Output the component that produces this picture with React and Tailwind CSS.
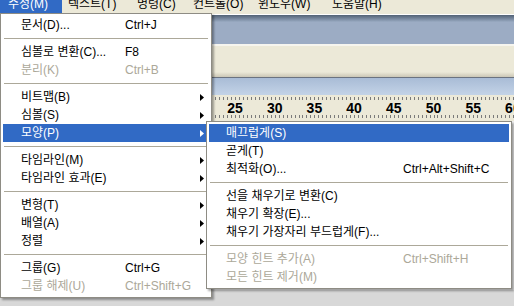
import React from "react";

const FONT = { fontFamily: '"Liberation Sans", "Noto Sans CJK KR", sans-serif' };

function Arrow({ white }) {
  return (
    <svg width="4" height="7" viewBox="0 0 4 7" className="block">
      <polygon points="0,0 4,3.5 0,7" fill={white ? "#ffffff" : "#000000"} />
    </svg>
  );
}

function Item({ label, shortcut, arrow, disabled, active, labelW, pl }) {
  const color = active ? "text-white" : disabled ? "text-[#aca899]" : "text-black";
  return (
    <div className={`flex h-[18px] items-center ${active ? "bg-[#316ac5]" : ""} ${color}`}>
      <div className="shrink-0 whitespace-nowrap" style={{ width: labelW, paddingLeft: pl }}>
        {label}
      </div>
      <div className="flex-1 whitespace-nowrap">{shortcut}</div>
      {arrow && (
        <div className="mr-[5px]">
          <Arrow white={active} />
        </div>
      )}
    </div>
  );
}

function Sep() {
  return <div className="my-[4px] mx-[1px] h-px bg-[#aca899]" />;
}

const mainItems = [
  { label: "문서(D)...", shortcut: "Ctrl+J" },
  "sep",
  { label: "심볼로 변환(C)...", shortcut: "F8" },
  { label: "분리(K)", shortcut: "Ctrl+B", disabled: true },
  "sep",
  { label: "비트맵(B)", arrow: true },
  { label: "심볼(S)", arrow: true },
  { label: "모양(P)", arrow: true, active: true },
  "sep",
  { label: "타임라인(M)", arrow: true },
  { label: "타임라인 효과(E)", arrow: true },
  "sep",
  { label: "변형(T)", arrow: true },
  { label: "배열(A)", arrow: true },
  { label: "정렬", arrow: true },
  "sep",
  { label: "그룹(G)", shortcut: "Ctrl+G" },
  { label: "그룹 해제(U)", shortcut: "Ctrl+Shift+G", disabled: true },
];

const subItems = [
  { label: "매끄럽게(S)", active: true },
  { label: "곧게(T)" },
  { label: "최적화(O)...", shortcut: "Ctrl+Alt+Shift+C" },
  "sep",
  { label: "선을 채우기로 변환(C)" },
  { label: "채우기 확장(E)..." },
  { label: "채우기 가장자리 부드럽게(F)..." },
  "sep",
  { label: "모양 힌트 추가(A)", shortcut: "Ctrl+Shift+H", disabled: true },
  { label: "모든 힌트 제거(M)", disabled: true },
];

const menuBar = [
  { label: "수정(M)", w: 62, pl: 8, active: true },
  { label: "텍스트(T)", w: 69, pl: 6 },
  { label: "명령(C)", w: 56, pl: 6 },
  { label: "컨트롤(O)", w: 65, pl: 6 },
  { label: "윈도우(W)", w: 74, pl: 6 },
  { label: "도움말(H)", w: 80, pl: 6 },
];

function Ruler() {
  const ticks = [];
  for (let k = -60; k < 80; k++) {
    const x = 235 + k * 3.97;
    if (x >= 0 && x <= 514) ticks.push(Math.round(x) + 0.5);
  }
  const nums = [25, 30, 35, 40, 45, 50, 55, 60];
  return (
    <svg width="514" height="26" className="block">
      {ticks.map((x, i) => (
        <g key={i}>
          <line x1={x} x2={x} y1="2" y2="5" stroke="#7a7a7a" strokeWidth="1" />
          <line x1={x} x2={x} y1="20" y2="23" stroke="#7a7a7a" strokeWidth="1" />
        </g>
      ))}
      {nums.map((n, i) => (
        <text
          key={n}
          x={235 + i * 39.7}
          y="18"
          textAnchor="middle"
          fontFamily='"Liberation Sans", sans-serif'
          fontWeight="700"
          fontSize="14"
          fill="#000"
        >
          {n}
        </text>
      ))}
    </svg>
  );
}

export default function App() {
  return (
    <div className="relative h-[306px] w-[514px] overflow-hidden bg-[#d8d8d8] text-[12px]" style={FONT}>
      {/* menu bar */}
      <div className="h-[13px] overflow-hidden bg-[#ece9d8]">
        <div className="-mt-[4px] flex h-[17px]">
          {menuBar.map((m) => (
            <div
              key={m.label}
              className={`h-[17px] shrink-0 whitespace-nowrap leading-[17px] ${m.active ? "bg-[#316ac5] text-white" : "text-black"}`}
              style={{ width: m.w, paddingLeft: m.pl }}
            >
              {m.label}
            </div>
          ))}
        </div>
      </div>
      {/* toolbars */}
      <div className="h-px bg-[#ece9d8]" />
      <div className="h-px bg-[#ffffff]" />
      <div className="h-[7px] bg-gradient-to-b from-[#526276] to-[#9aabc3]" />
      <div className="h-[22px] bg-[#9cacc4]" />
      <div className="h-[2px] bg-[#f6f5ef]" />
      <div className="h-[26px] bg-[#ece9d8]" />
      <div className="h-[5px] bg-gradient-to-b from-[#ece9d8] to-[#cbc7b6]" />
      <div className="h-px bg-[#6b7380]" />
      <div className="h-[17px] bg-gradient-to-b from-[#a9bcd6] to-[#c3d3e7]" />
      <div className="h-[26px] bg-[#ece9d8]">
        <Ruler />
      </div>
      <div className="h-[169px] bg-[#f2f2f2]" />

      {/* main menu */}
      <div className="absolute left-0 top-[13px] w-[212px] border border-[#8e8c84] bg-white px-[2px] py-[2px] shadow-[2px_2px_2px_rgba(0,0,0,0.35)]">
        {mainItems.map((it, i) =>
          it === "sep" ? (
            <Sep key={i} />
          ) : (
            <Item key={i} {...it} labelW={122} pl={18} />
          )
        )}
      </div>

      {/* submenu */}
      <div className="absolute left-[206px] top-[121px] w-[306px] border border-[#8e8c84] bg-white px-[2px] py-[2px] shadow-[2px_2px_2px_rgba(0,0,0,0.35)]">
        {subItems.map((it, i) =>
          it === "sep" ? (
            <Sep key={i} />
          ) : (
            <Item key={i} {...it} labelW={194} pl={17} />
          )
        )}
      </div>
    </div>
  );
}
